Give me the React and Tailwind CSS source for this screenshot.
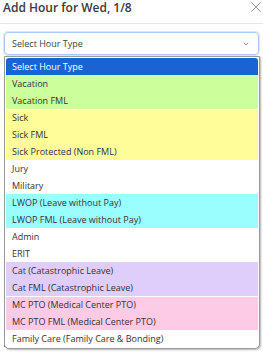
import { X, ChevronDown } from 'lucide-react';

const options = [
  { label: 'Select Hour Type', bg: 'bg-[#1b63d3] text-white rounded-t-[3px]' },
  { label: 'Vacation', bg: 'bg-[#ccfe9c]' },
  { label: 'Vacation FML', bg: 'bg-[#ccfe9c]' },
  { label: 'Sick', bg: 'bg-[#fffd99]', gap: true },
  { label: 'Sick FML', bg: 'bg-[#fffd99]' },
  { label: 'Sick Protected (Non FML)', bg: 'bg-[#fffd99]' },
  { label: 'Jury', bg: 'bg-white' },
  { label: 'Military', bg: 'bg-white' },
  { label: 'LWOP (Leave without Pay)', bg: 'bg-[#9bfefe]' },
  { label: 'LWOP FML (Leave without Pay)', bg: 'bg-[#9bfefe]' },
  { label: 'Admin', bg: 'bg-white' },
  { label: 'ERIT', bg: 'bg-white' },
  { label: 'Cat (Catastrophic Leave)', bg: 'bg-[#dfcdfc]' },
  { label: 'Cat FML (Catastrophic Leave)', bg: 'bg-[#dfcdfc]' },
  { label: 'MC PTO (Medical Center PTO)', bg: 'bg-[#fdcbe5]', gap: true },
  { label: 'MC PTO FML (Medical Center PTO)', bg: 'bg-[#fdcbe5]' },
  { label: 'Family Care (Family Care & Bonding)', bg: 'bg-white' },
];

const App = () => {
  return (
    <div className="relative w-[263px] h-[352px] overflow-hidden bg-white font-['Open_Sans',sans-serif] text-[#333]">
      {/* Header */}
      <div className="flex items-start justify-between h-[24px] pl-[3px] border-b border-[#e6e6e6]">
        <h2 className="text-[12px] leading-[15px] font-semibold text-[#3a3a3a]">Add Hour for Wed, 1/8</h2>
        <X className="w-[18px] h-[18px] -mt-[2px] -mr-[2px] text-[#7a7a7a]" strokeWidth={1} />
      </div>

      {/* Body */}
      <div className="px-[4px] pt-[8px]">
        <div className="flex items-center justify-between h-[23px] pl-[7px] pr-[8px] rounded-[4px] border border-[#a9c8f5] shadow-[0_0_0_1px_#dbe8fb] text-[9px] text-[#444]">
          <span>Select Hour Type</span>
          <ChevronDown className="w-[8px] h-[8px] text-[#555]" strokeWidth={2} />
        </div>
        {/* content behind the open list */}
        <div className="flex flex-col mt-[6px]">
          <div className="h-[86px] bg-[#f3f3f3]"></div>
          <div className="h-[200px] bg-[#6f6f6f]"></div>
        </div>
      </div>

      {/* Open dropdown list */}
      <div className="absolute left-[4px] top-[56px] w-[256px] bg-white border border-[#9a9a9a] rounded-b-[5px] shadow-[1px_1px_2px_rgba(0,0,0,0.3)] p-px text-[9px] text-[#333]">
        {options.map((opt) => (
          <div
            key={opt.label}
            className={`flex items-center h-[17px] pl-[6px] ${opt.bg} ${opt.gap ? 'border-t border-white' : ''}`}
          >
            {opt.label}
          </div>
        ))}
      </div>
    </div>
  );
};

export default App;
